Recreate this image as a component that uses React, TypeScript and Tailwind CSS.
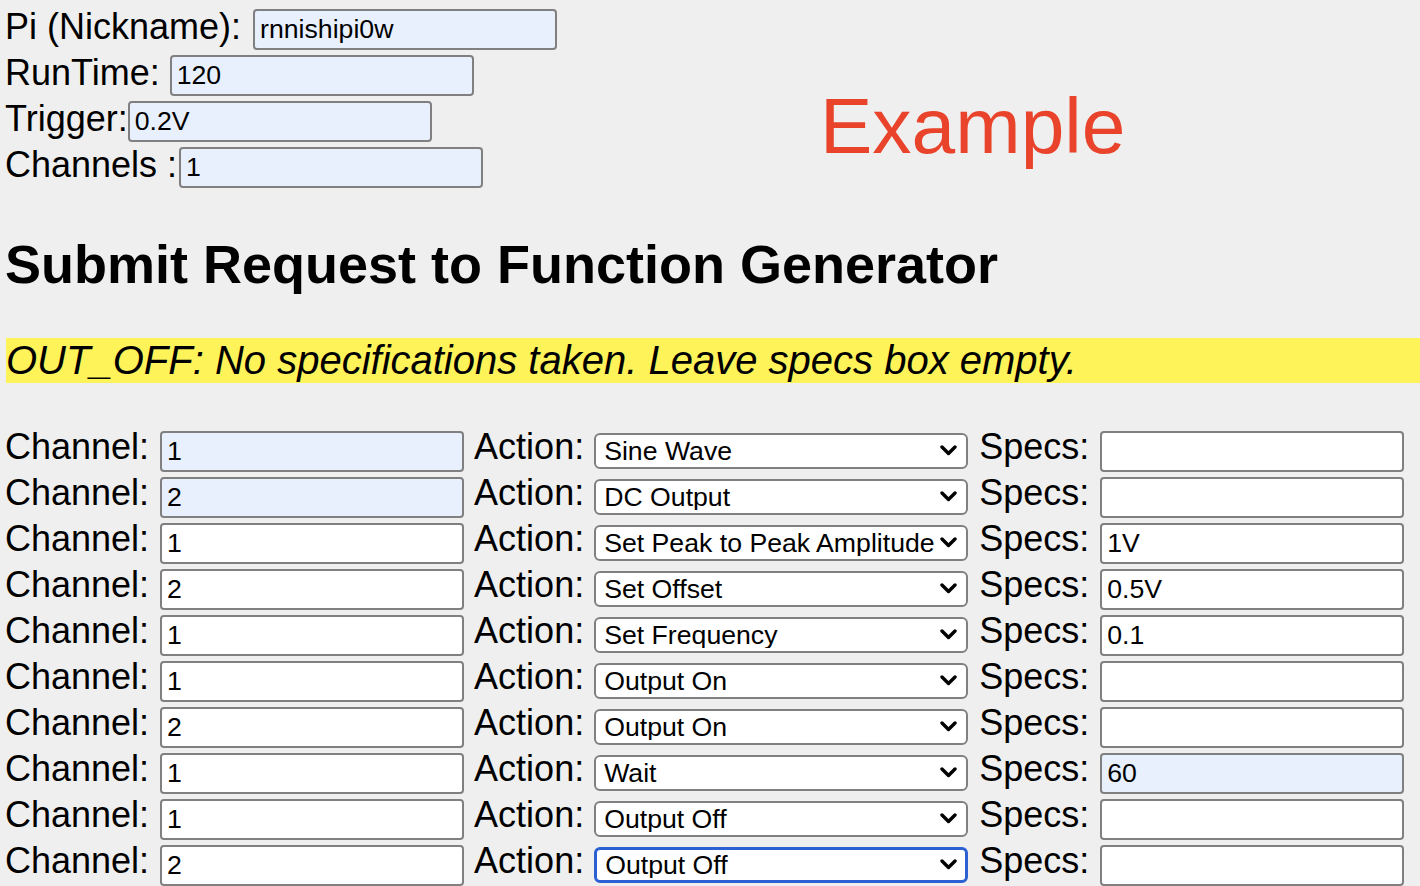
import React from "react";

const FONT = { fontFamily: '"Liberation Sans", Arial, Helvetica, sans-serif' };

type Row = { ch: string; chBlue?: boolean; action: string; spec?: string; specBlue?: boolean; focused?: boolean };

const ROWS: Row[] = [
  { ch: "1", chBlue: true, action: "Sine Wave" },
  { ch: "2", chBlue: true, action: "DC Output" },
  { ch: "1", action: "Set Peak to Peak Amplitude", spec: "1V" },
  { ch: "2", action: "Set Offset", spec: "0.5V" },
  { ch: "1", action: "Set Frequency", spec: "0.1" },
  { ch: "1", action: "Output On" },
  { ch: "2", action: "Output On" },
  { ch: "1", action: "Wait", spec: "60", specBlue: true },
  { ch: "1", action: "Output Off" },
  { ch: "2", action: "Output Off", focused: true },
];

const ACTIONS = [
  "Sine Wave",
  "Square Wave",
  "DC Output",
  "Set Peak to Peak Amplitude",
  "Set Offset",
  "Set Frequency",
  "Output On",
  "Output Off",
  "Wait",
];

function TextBox({ value, blue, ml }: { value: string; blue?: boolean; ml: string }) {
  return (
    <input
      type="text"
      defaultValue={value}
      style={FONT}
      className={`${ml} mt-[3px] h-[41px] w-[304px] shrink-0 rounded-[4px] border-2 border-[#808080] px-[5px] text-[26.67px] text-black outline-none ${
        blue ? "bg-[#e8f0fe]" : "bg-white"
      }`}
    />
  );
}

function Select({ value, focused }: { value: string; focused?: boolean }) {
  return (
    <div className="relative ml-[10px] mt-[5.5px] h-[36px] w-[374px] shrink-0">
      <select
        defaultValue={value}
        style={FONT}
        className={`h-full w-full appearance-none rounded-[6px] bg-white pl-[8px] text-[26.67px] leading-none text-black outline-none ${
          focused ? "border-[3px] border-[#2b61d3] pl-[7px]" : "border-2 border-[#808080]"
        }`}
      >
        {ACTIONS.map((a) => (
          <option key={a} value={a}>
            {a}
          </option>
        ))}
      </select>
      <svg
        className="pointer-events-none absolute right-[11px] top-[11px]"
        width="17"
        height="13"
        viewBox="0 0 17 13"
      >
        <path d="M2 3 L8.5 9.5 L15 3" fill="none" stroke="#000" strokeWidth="3.4" strokeLinecap="round" strokeLinejoin="round" />
      </svg>
    </div>
  );
}

export default function App() {
  return (
    <div style={FONT} className="min-h-[886px] w-full overflow-hidden bg-[#efefef] pl-[5px] text-black">
      <div className="flex">
        <div className="w-[552px] shrink-0 pt-[6px]">
          <div className="flex h-[46px] items-start">
            <span className="text-[36px] leading-[42px] whitespace-nowrap">Pi (Nickname):</span>
            <TextBox value="rnnishipi0w" blue ml="ml-[12px]" />
          </div>
          <div className="flex h-[46px] items-start">
            <span className="text-[36px] leading-[42px] whitespace-nowrap">RunTime:</span>
            <TextBox value="120" blue ml="ml-[10px]" />
          </div>
          <div className="flex h-[46px] items-start">
            <span className="text-[36px] leading-[42px] whitespace-nowrap">Trigger:</span>
            <TextBox value="0.2V" blue ml="ml-[0px]" />
          </div>
          <div className="flex h-[46px] items-start">
            <span className="text-[36px] leading-[42px] whitespace-nowrap">Channels :</span>
            <TextBox value="1" blue ml="ml-[2px]" />
          </div>
        </div>
        <div className="ml-[263px] mt-[87px] self-start text-[78.5px] leading-[79px] text-[#e9442b] whitespace-nowrap">
          Example
        </div>
      </div>

      <h2 className="mt-[47px] text-[54px] font-bold leading-[54px] whitespace-nowrap">
        Submit Request to Function Generator
      </h2>

      <div className="ml-[1px] mt-[47px] h-[45px] bg-[#fef359] text-[40px] italic leading-[45px] whitespace-nowrap">
        OUT_OFF: No specifications taken. Leave specs box empty.
      </div>

      <div className="mt-[44.5px]">
        {ROWS.map((r, i) => (
          <div key={i} className="flex h-[46px] items-start">
            <span className="text-[36px] leading-[38px] whitespace-nowrap">Channel:</span>
            <TextBox value={r.ch} blue={r.chBlue} ml="ml-[11px]" />
            <span className="ml-[10px] text-[36px] leading-[38px] whitespace-nowrap">Action:</span>
            <Select value={r.action} focused={r.focused} />
            <span className="ml-[11px] text-[36px] leading-[38px] whitespace-nowrap">Specs:</span>
            <TextBox value={r.spec ?? ""} blue={r.specBlue} ml="ml-[11px]" />
          </div>
        ))}
      </div>
    </div>
  );
}
